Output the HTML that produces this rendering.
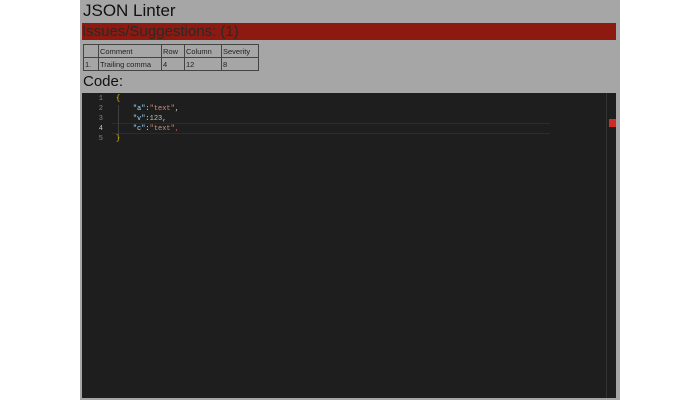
<!DOCTYPE html>
<html><head><style>
body{margin:0;background:#fff;width:700px;height:400px;overflow:hidden;font-family:"Liberation Sans",sans-serif}
#page{position:absolute;left:80px;top:0;width:540px;height:400px;background:#a6a6a6}
h1{position:absolute;left:3px;top:1px;margin:0;font-size:17px;font-weight:normal;color:#111}
#bar{position:absolute;left:2px;top:23px;width:534px;height:17px;background:#8c1a10;color:#2a2a2a;font-size:15px;line-height:17px}
table{position:absolute;left:3px;top:44px;border-collapse:collapse;font-size:7.5px;color:#222}
td{border:1px solid #444;padding:0 1px;height:12px}
#code{position:absolute;left:3px;top:73px;font-size:15px;color:#111}
#ed{position:absolute;left:2px;top:93px;width:534px;height:305px;background:#1e1e1e;font-family:"Liberation Mono",monospace;font-size:7px}
.ln{position:absolute;left:0;width:21px;text-align:right;color:#858585}
.c{position:absolute;left:34px;white-space:pre;color:#d4d4d4}
.k{color:#9cdcfe}.s{color:#ce9178}.n{color:#b5cea8}.b{color:#ffd700}
</style></head><body><div id="page">
<h1>JSON Linter</h1>
<div id="bar">Issues/Suggestions: (1)</div>
<table><tr><td style="width:12px"></td><td style="width:60px">Comment</td><td style="width:20px">Row</td><td style="width:34px">Column</td><td style="width:34px">Severity</td></tr>
<tr><td>1.</td><td>Trailing comma</td><td>4</td><td>12</td><td>8</td></tr></table>
<div id="code">Code:</div>
<div id="ed">
<div style="position:absolute;left:30px;top:30px;width:438px;height:9px;border-top:1px solid #2c2c2c;border-bottom:1px solid #2c2c2c"></div>
<div style="position:absolute;left:36px;top:12px;width:1px;height:30px;background:#404040"></div>
<div style="position:absolute;left:524px;top:0;width:1px;height:305px;background:#333"></div>
<div style="position:absolute;left:527px;top:26px;width:7px;height:8px;background:#d02b20"></div>
<div class="ln" style="top:2px">1</div><div class="c b" style="top:2px">{</div>
<div class="ln" style="top:12px">2</div><div class="c" style="top:12px">    <span class="k">"a"</span>:<span class="s">"text"</span>,</div>
<div class="ln" style="top:22px">3</div><div class="c" style="top:22px">    <span class="k">"v"</span>:<span class="n">123</span>,</div>
<div class="ln" style="top:32px;color:#c6c6c6">4</div><div class="c" style="top:32px">    <span class="k">"c"</span>:<span class="s">"text"</span><span style="color:#f44">,</span></div>
<div class="ln" style="top:42px">5</div><div class="c b" style="top:42px">}</div>
</div>
</div></body></html>
